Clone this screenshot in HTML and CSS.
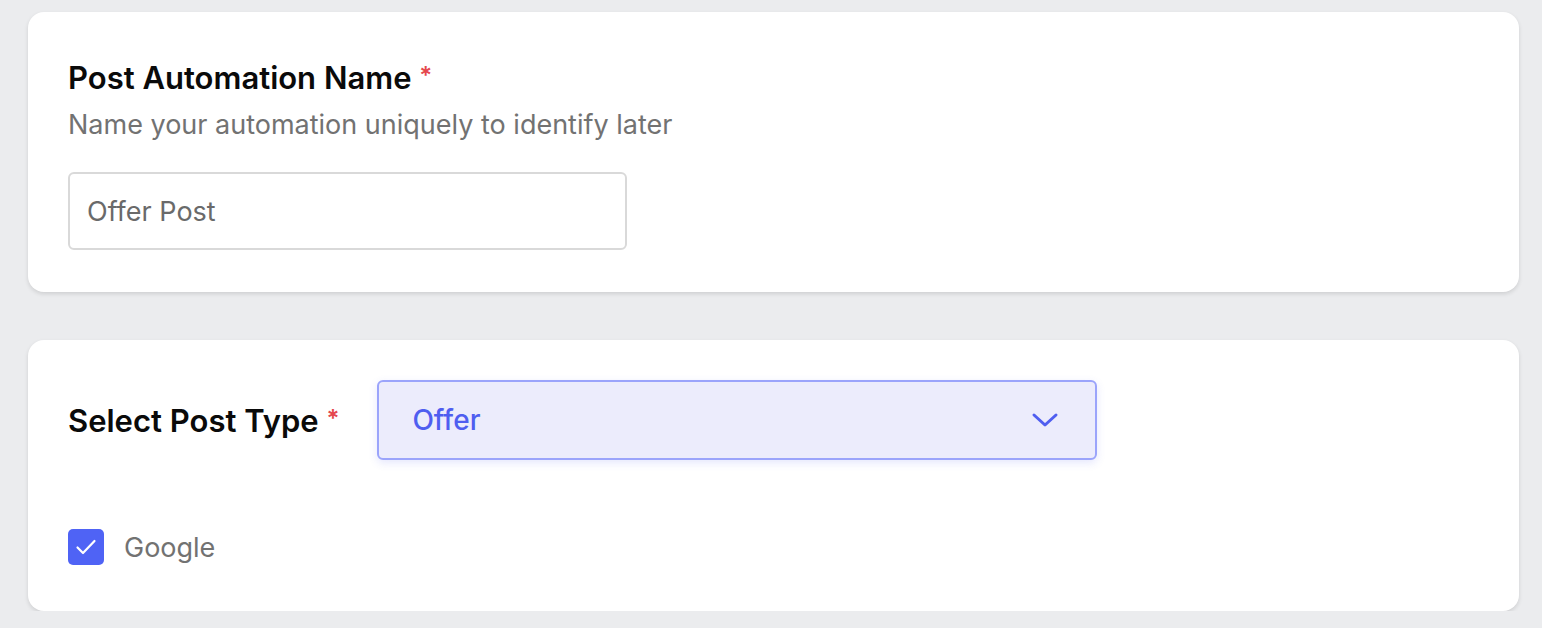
FILE: index.html
```html
<!DOCTYPE html>
<html lang="en">
<head>
    <meta charset="UTF-8">
    <meta name="viewport" content="width=device-width, initial-scale=1.0">
    <title>Post Automation</title>
    <link rel="stylesheet" href="styles.css">
</head>
<body>
    <div class="page">
        <!-- Automation name -->
        <div class="card card-name">
            <h2 class="field-title">Post Automation Name <span class="required">*</span></h2>
            <p class="field-hint">Name your automation uniquely to identify later</p>
            <input class="text-input" type="text" value="Offer Post">
        </div>

        <!-- Post type -->
        <div class="card card-type">
            <div class="type-row">
                <h2 class="field-title">Select Post Type <span class="required">*</span></h2>
                <div class="select-box">
                    <span class="select-value">Offer</span>
                    <svg class="chevron" width="28" height="16" viewBox="0 0 28 16" fill="none" stroke="currentColor" stroke-width="3" stroke-linecap="round" stroke-linejoin="round">
                        <polyline points="3 3 14 13 25 3"></polyline>
                    </svg>
                </div>
            </div>

            <label class="check-row">
                <span class="checkbox">
                    <svg width="24" height="24" viewBox="0 0 24 24" fill="none" stroke="#fff" stroke-width="2.2" stroke-linecap="round" stroke-linejoin="round">
                        <polyline points="3.5 12.5 9 18 20.5 6"></polyline>
                    </svg>
                </span>
                <span class="check-label">Google</span>
            </label>
        </div>
    </div>
</body>
</html>
```

FILE: styles.css
```css
/* General Styles */
body {
    margin: 0;
    padding: 0;
    background-color: #ebecee;
    font-family: Inter, "Noto Sans", sans-serif;
}

.page {
    display: flex;
    flex-direction: column;
    gap: 48px;
    padding: 12px 23px 0 28px;
}

.card {
    background-color: #fff;
    border-radius: 16px;
    box-shadow: 0 2px 4px rgba(0, 0, 0, 0.12);
    box-sizing: border-box;
}

.card-name {
    height: 280px;
    padding: 40px 40px 0 40px;
}

.card-type {
    height: 271px;
    padding: 40px 40px 0 40px;
}

.field-title {
    margin: 0;
    font-size: 31px;
    font-weight: 600;
    color: #0a0a0a;
    line-height: 48px;
}

.required {
    color: #e5484d;
    font-size: 24px;
    vertical-align: 5px;
}

.field-hint {
    margin: 0;
    font-size: 27px;
    color: #727272;
    line-height: 46px;
}

.text-input {
    display: block;
    margin-top: 24px;
    width: 559px;
    height: 78px;
    box-sizing: border-box;
    border: 2px solid #d9d9d9;
    border-radius: 6px;
    padding: 0 17px;
    font-family: inherit;
    font-size: 27px;
    color: #6a6a6a;
    outline: none;
}

.type-row {
    display: flex;
    align-items: center;
    gap: 38px;
}

.select-box {
    width: 720px;
    height: 80px;
    box-sizing: border-box;
    display: flex;
    align-items: center;
    justify-content: space-between;
    padding: 0 36px 0 33px;
    background-color: #ececfc;
    border: 2px solid #9ba4fb;
    border-radius: 6px;
    box-shadow: 0 3px 8px rgba(79, 94, 240, 0.15);
    color: #4f5ef0;
}

.select-value {
    font-size: 28px;
    font-weight: 500;
}

.check-row {
    display: flex;
    align-items: center;
    gap: 20px;
    margin-top: 69px;
}

.checkbox {
    width: 36px;
    height: 36px;
    border-radius: 5px;
    background-color: #4f63f5;
    display: flex;
    align-items: center;
    justify-content: center;
}

.check-label {
    font-size: 27px;
    color: #727272;
}
```
